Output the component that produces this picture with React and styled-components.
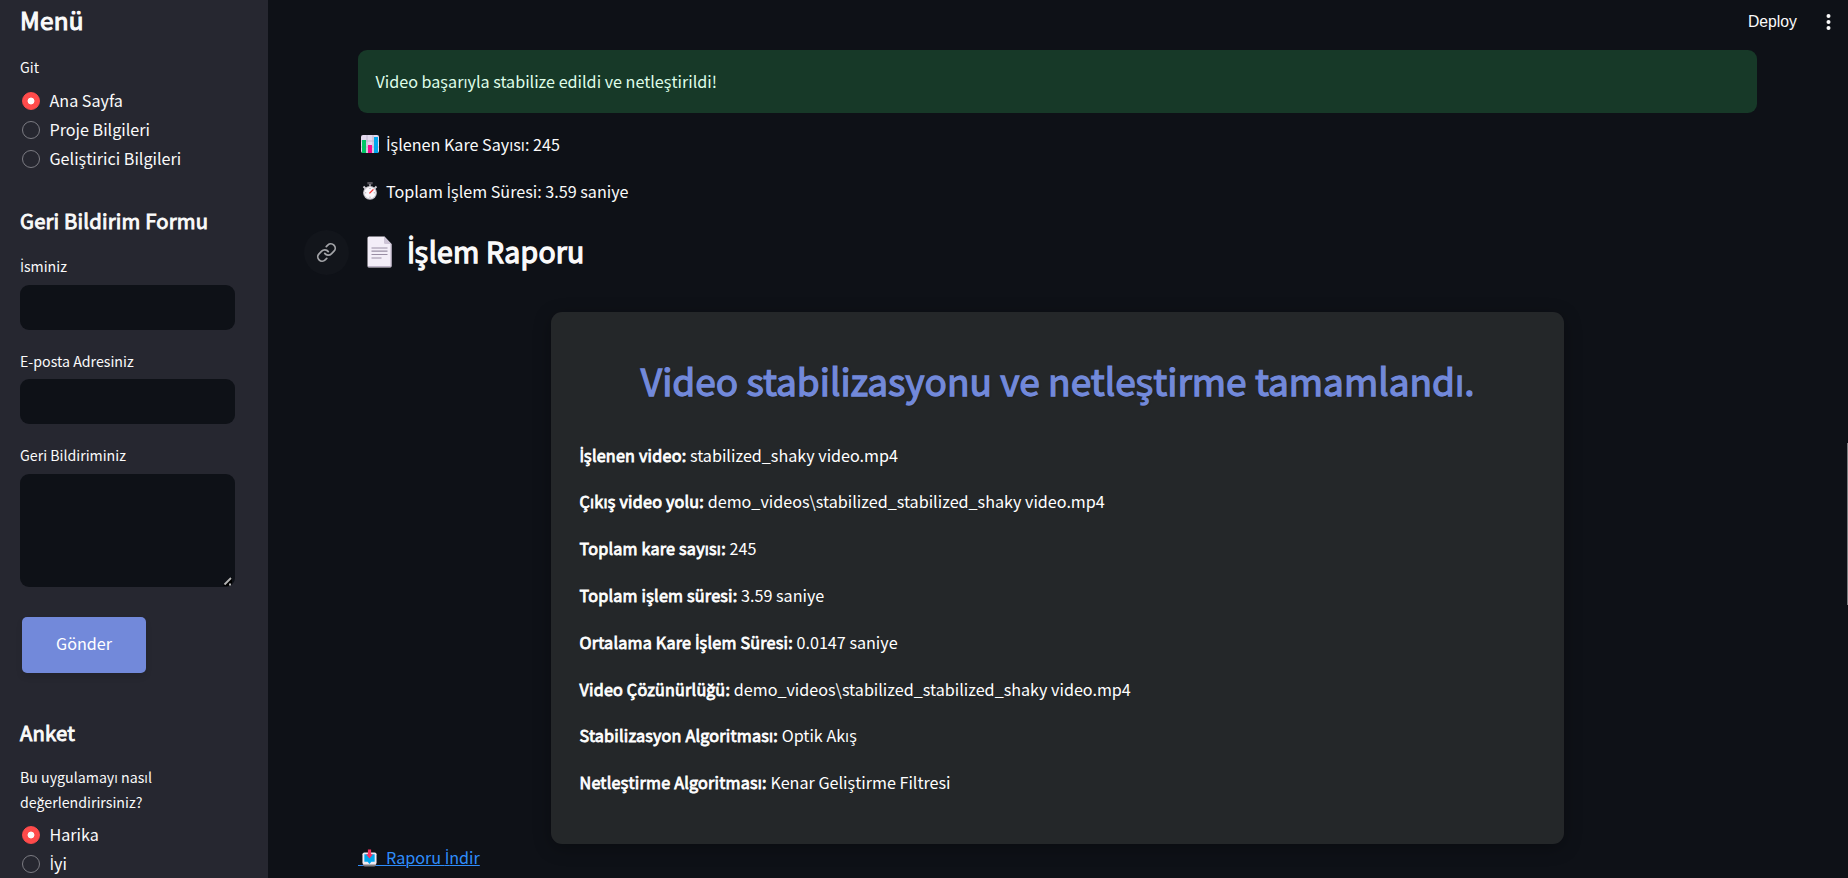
import React from "react";
import styled, { createGlobalStyle, css } from "styled-components";

const GlobalStyle = createGlobalStyle`
  *, *::before, *::after { box-sizing: border-box; }
  html, body { margin: 0; height: 100%; overflow: hidden; background: #0e1117; }
  body {
    font-family: "Noto Sans CJK SC", "Open Sans", sans-serif;
    font-size: 16.15px;
    line-height: 28.8px;
    color: #fafafa;
  }
  h1, h2, h3, p { margin: 0; }
`;

/* Semibold look built from the regular weight's narrower letter widths. */
const semibold = css`
  font-weight: 400;
  -webkit-text-stroke: 0.045em currentColor;
  letter-spacing: 0.009em;
`;

const Page = styled.div`
  display: flex;
  width: 100%;
  height: 878px;
  overflow: hidden;
  position: relative;
`;

const Sidebar = styled.aside`
  flex: 0 0 268px;
  height: 878px;
  overflow: hidden;
  background: #262730;
  padding: 4px 33px 0 20px;
  display: flex;
  flex-direction: column;
`;

const SidebarTitle = styled.h2`
  font-size: 24.3px;
  line-height: 32px;
  white-space: nowrap;
  ${semibold}
`;

const SidebarHeading = styled.h3`
  font-size: 20.25px;
  line-height: 28px;
  white-space: nowrap;
  margin-top: ${(p) => p.$top}px;
  ${semibold}
`;

const Label = styled.label`
  display: block;
  font-size: 14.2px;
  line-height: 25px;
  margin-top: ${(p) => p.$top}px;
`;

const RadioGroup = styled.div`
  display: flex;
  flex-direction: column;
  flex: none;
  margin-top: ${(p) => p.$top}px;
  padding-left: 2px;
`;

const RadioRow = styled.div`
  display: flex;
  align-items: center;
  gap: 9.5px;
  height: 28.8px;
`;

const RadioDot = styled.span`
  width: 18px;
  height: 18px;
  flex: none;
  border-radius: 50%;
  border: 1px solid ${(p) => (p.$on ? "#ff4b4b" : "#7b7b82")};
  background: ${(p) =>
    p.$on ? "radial-gradient(circle, #fafafa 3px, #ff4b4b 3.8px)" : "transparent"};
`;

const RadioText = styled.span`
  white-space: nowrap;
  padding-bottom: 2px;
`;

const Input = styled.input`
  display: block;
  flex: none;
  width: 215px;
  height: 45px;
  margin-top: ${(p) => p.$top}px;
  border: 0;
  border-radius: 9px;
  background: #0e1117;
`;

const TextAreaBox = styled.div`
  position: relative;
  flex: none;
  width: 215px;
  height: 113px;
  margin-top: 6px;
`;

const TextArea = styled.textarea`
  display: block;
  width: 100%;
  height: 100%;
  border: 0;
  border-radius: 9px;
  background: #0e1117;
  resize: none;
`;

const Grip = styled.svg`
  position: absolute;
  right: 2px;
  bottom: 1px;
`;

const SubmitButton = styled.button`
  flex: none;
  width: 124px;
  height: 56px;
  margin: 30px 0 0 2px;
  border: 0;
  border-radius: 5px;
  background: #7289da;
  color: #fff;
  font: inherit;
  padding: 0 0 2.5px;
  box-shadow: 0 4px 6px rgba(0, 0, 0, 0.1);
`;

const Main = styled.main`
  flex: 1;
  min-width: 0;
  position: relative;
  padding: 50px 91px 0 90px;
`;

const Toolbar = styled.header`
  position: absolute;
  top: 0;
  right: 0;
  height: 44px;
  padding-right: 17px;
  display: flex;
  align-items: center;
  gap: 29px;
  font-family: "Liberation Sans", sans-serif;
  font-size: 15.75px;
`;

const Success = styled.div`
  height: 63px;
  border-radius: 9px;
  background: #173928;
  color: #dffde9;
  padding: 17px 18px 0 17.5px;
`;

const StatList = styled.div`
  display: flex;
  flex-direction: column;
  gap: 18px;
  margin-top: 17px;
`;

const Stat = styled.p`
  display: flex;
  align-items: center;
  height: 28.8px;
  white-space: pre;
  padding-left: 3px;
  gap: 7px;
`;

const HeadingRow = styled.div`
  display: flex;
  align-items: center;
  height: 45px;
  margin: 24px 0 0 -54px;
`;

const Anchor = styled.span`
  width: 45px;
  height: 45px;
  border-radius: 50%;
  background: #12151b;
  display: flex;
  align-items: center;
  justify-content: center;
  margin-right: 18px;
`;

const Heading = styled.h2`
  font-size: 28.4px;
  line-height: 40px;
  margin-left: 15px;
  padding-bottom: 2px;
  white-space: nowrap;
  ${semibold}
`;

const Card = styled.section`
  width: 1013px;
  height: 532px;
  margin: 37px auto 0;
  border-radius: 11px;
  background: #242729;
  padding: 42px 28px 0 28.5px;
  box-shadow: 0 4px 18px rgba(0, 0, 0, 0.3);
`;

const CardTitle = styled.h1`
  font-size: 37px;
  line-height: 52px;
  color: #7289da;
  text-align: center;
  white-space: nowrap;
  text-shadow: 1px 1px 2px rgba(0, 0, 0, 0.3);
  margin-bottom: 35px;
  font-weight: 400;
  -webkit-text-stroke: 0.036em currentColor;
`;

const Field = styled.p`
  height: 46.8px;
  white-space: nowrap;
  color: #fff;
`;

const FieldName = styled.b`
  font-weight: 400;
  -webkit-text-stroke: 0.05em currentColor;
  letter-spacing: 0.0135em;
`;

const Download = styled.a`
  display: block;
  position: relative;
  width: max-content;
  margin-top: -1px;
  color: #2f8dfb;
  white-space: pre;
  text-decoration: underline;
  text-decoration-thickness: 1px;
  text-underline-offset: 1px;

  &::before {
    content: "";
    position: absolute;
    left: 0;
    top: 22px;
    width: 29px;
    height: 1px;
    background: currentColor;
  }
`;

const ScrollThumb = styled.div`
  position: absolute;
  right: 0;
  top: 443px;
  width: 1px;
  height: 162px;
  background: #7b7c80;
`;

const DottedI = styled.span`
  font-family: "Open Sans", sans-serif;
  font-size: 1.027em;
  line-height: 0;
  letter-spacing: -0.01em;
`;

/* Sets the dotted capital İ in a face that has the glyph. */
const Tr = ({ children }) =>
  children.split(/(İ)/).map((part, i) =>
    part === "İ" ? <DottedI key={i}>İ</DottedI> : part
  );

const ChartIcon = () => (
  <svg width="18" height="18" viewBox="0 0 18 18">
    <rect width="18" height="18" rx="2" fill="#e3d9ee" />
    <path d="M6 0v18M12 0v18M0 6h18M0 12h18" stroke="#b9aec6" strokeWidth=".8" />
    <rect x="1" y="5" width="4" height="13" fill="#00c765" />
    <rect x="7" y="10" width="4" height="8" fill="#f70a8d" />
    <rect x="13" y="2" width="4" height="16" fill="#00a6ed" />
  </svg>
);

const TimerIcon = () => (
  <svg width="18" height="18" viewBox="0 0 18 18">
    <rect x="6.3" y="0" width="5.4" height="2.4" rx=".6" fill="#55535a" />
    <rect x="8" y="2" width="2" height="3" fill="#8c8a90" />
    <path d="M2.5 4.5l2 2M15.5 4.5l-2 2" stroke="#d0cdd3" strokeWidth="1.8" />
    <circle cx="9" cy="10.8" r="6.9" fill="#c9c6cc" />
    <circle cx="9" cy="10.8" r="5.7" fill="#fbf8fc" />
    <path d="M9 6v1M9 14.7v1M4.2 10.8h1M12.8 10.8h1" stroke="#88858c" strokeWidth=".8" />
    <path d="M8.4 11.4l4-4" stroke="#f8312f" strokeWidth="1.3" />
  </svg>
);

const DocIcon = () => (
  <svg width="25" height="32" viewBox="0 0 25 32">
    <path d="M2 .5h15.5L24.5 8v22a1.5 1.5 0 0 1-1.5 1.5H2A1.5 1.5 0 0 1 .5 30V2A1.5 1.5 0 0 1 2 .5z" fill="#f3eef8" />
    <path d="M17 .5L24.5 8H18.5a1.5 1.5 0 0 1-1.5-1.5z" fill="#cdc4d6" />
    <path d="M24 8v22.5H1" fill="none" stroke="#bdb3c8" />
    <path d="M4.5 12h16M4.5 15.2h16M4.5 18.5h16M4.5 22h10" stroke="#998ea4" strokeWidth="1.2" />
  </svg>
);

const LinkIcon = () => (
  <svg width="21" height="21" viewBox="0 0 24 24" fill="none" stroke="#a3a4a8" strokeWidth="2" strokeLinecap="round" strokeLinejoin="round">
    <path d="M10 13a5 5 0 0 0 7.54.54l3-3a5 5 0 0 0-7.07-7.07l-1.72 1.71" />
    <path d="M14 11a5 5 0 0 0-7.54-.54l-3 3a5 5 0 0 0 7.07 7.07l1.71-1.71" />
  </svg>
);

const InboxSvg = styled.svg`
  position: relative;
  margin: 0 9px 0 4px;
  vertical-align: -3px;
`;

const InboxIcon = () => (
  <InboxSvg width="15" height="18" viewBox="0 0 16 18">
    <path d="M1 12h14v4a2 2 0 0 1-2 2H3a2 2 0 0 1-2-2z" fill="#7d7a80" />
    <rect x=".5" y="3" width="15" height="13" rx="2" fill="#eee9f2" />
    <path d="M2.5 5h11v8H10l-2 2.5L6 13H2.5z" fill="#00a6ed" />
    <path d="M6.3 0h3.4v5h2L8 9.5 4.3 5h2z" fill="#f8315f" />
  </InboxSvg>
);

const Dots = () => (
  <svg width="5" height="16" viewBox="0 0 5 16" fill="#fafafa">
    <circle cx="2.5" cy="2" r="2" />
    <circle cx="2.5" cy="8" r="2" />
    <circle cx="2.5" cy="14" r="2" />
  </svg>
);

const GripIcon = () => (
  <Grip width="10" height="10" viewBox="0 0 10 10">
    <path d="M0 10L9 1v6L6 10z" fill="#000" />
    <path d="M1.5 8.5L8 2M6 8.5h2" stroke="#b4b4b4" strokeWidth="1.8" />
  </Grip>
);

const Radios = ({ options, top }) => (
  <RadioGroup $top={top}>
    {options.map((name, i) => (
      <RadioRow key={name}>
        <RadioDot $on={i === 0} />
        <RadioText><Tr>{name}</Tr></RadioText>
      </RadioRow>
    ))}
  </RadioGroup>
);

const fields = [
  ["İşlenen video:", "stabilized_shaky video.mp4"],
  ["Çıkış video yolu:", "demo_videos\\stabilized_stabilized_shaky video.mp4"],
  ["Toplam kare sayısı:", "245"],
  ["Toplam işlem süresi:", "3.59 saniye"],
  ["Ortalama Kare İşlem Süresi:", "0.0147 saniye"],
  ["Video Çözünürlüğü:", "demo_videos\\stabilized_stabilized_shaky video.mp4"],
  ["Stabilizasyon Algoritması:", "Optik Akış"],
  ["Netleştirme Algoritması:", "Kenar Geliştirme Filtresi"],
];

export default function App() {
  return (
    <Page>
      <GlobalStyle />
      <Sidebar>
        <SidebarTitle>Menü</SidebarTitle>
        <Label $top={19}>Git</Label>
        <Radios top={7} options={["Ana Sayfa", "Proje Bilgileri", "Geliştirici Bilgileri"]} />
        <SidebarHeading $top={33.5}>Geri Bildirim Formu</SidebarHeading>
        <Label $top={19}><Tr>İsminiz</Tr></Label>
        <Input $top={6} />
        <Label $top={19}>E-posta Adresiniz</Label>
        <Input $top={5} />
        <Label $top={19}>Geri Bildiriminiz</Label>
        <TextAreaBox>
          <TextArea />
          <GripIcon />
        </TextAreaBox>
        <SubmitButton>Gönder</SubmitButton>
        <SidebarHeading $top={46}>Anket</SidebarHeading>
        <Label $top={18}>Bu uygulamayı nasıl değerlendirirsiniz?</Label>
        <Radios top={6} options={["Harika", "İyi"]} />
      </Sidebar>
      <Main>
        <Toolbar>
          <span>Deploy</span>
          <Dots />
        </Toolbar>
        <Success>Video başarıyla stabilize edildi ve netleştirildi!</Success>
        <StatList>
          <Stat><ChartIcon /><span><Tr>İşlenen Kare Sayısı: 245</Tr></span></Stat>
          <Stat><TimerIcon /><span><Tr>Toplam İşlem Süresi: 3.59 saniye</Tr></span></Stat>
        </StatList>
        <HeadingRow>
          <Anchor><LinkIcon /></Anchor>
          <DocIcon />
          <Heading><Tr>İşlem Raporu</Tr></Heading>
        </HeadingRow>
        <Card>
          <CardTitle>Video stabilizasyonu ve netleştirme tamamlandı.</CardTitle>
          {fields.map(([name, value]) => (
            <Field key={name}><FieldName><Tr>{name}</Tr></FieldName> {value}</Field>
          ))}
        </Card>
        <Download href="#"><InboxIcon /><Tr>Raporu İndir</Tr></Download>
        <ScrollThumb />
      </Main>
    </Page>
  );
}
